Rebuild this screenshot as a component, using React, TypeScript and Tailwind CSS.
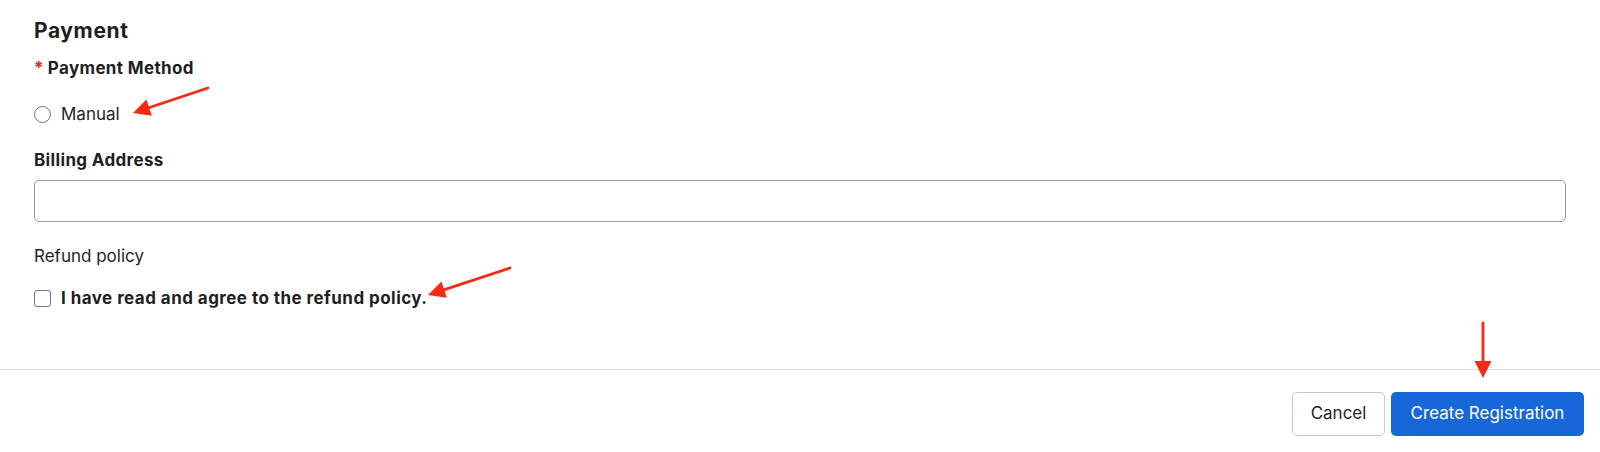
import React from 'react';

function Arrow({ x1, y1, x2, y2 }: { x1: number; y1: number; x2: number; y2: number }) {
  // line from (x1,y1) to tip (x2,y2), with a filled head
  const dx = x2 - x1;
  const dy = y2 - y1;
  const len = Math.sqrt(dx * dx + dy * dy);
  const ux = dx / len;
  const uy = dy / len;
  const headLen = 17;
  const headW = 8.5;
  const bx = x2 - ux * headLen;
  const by = y2 - uy * headLen;
  const p1 = `${bx - uy * headW},${by + ux * headW}`;
  const p2 = `${bx + uy * headW},${by - ux * headW}`;
  return (
    <g>
      <line x1={x1} y1={y1} x2={bx + ux * 2} y2={by + uy * 2} stroke="#f52a12" strokeWidth={2.8} strokeLinecap="round" />
      <polygon points={`${x2},${y2} ${p1} ${p2}`} fill="#f52a12" />
    </g>
  );
}

export default function App() {
  return (
    <div className="relative w-[1600px] h-[452px] bg-white text-[#1f1f1f] font-['Inter','Liberation_Sans',sans-serif] overflow-hidden">
      <div className="px-[34px] pt-[17px]">
        <h2 className="text-[21px] leading-[28px] font-bold tracking-[0.6px]">Payment</h2>

        <div className="mt-[11px] text-[17px] leading-[24px] font-bold tracking-[0.35px]">
          <span className="text-[#e5271a] mr-[4px]">*</span>Payment Method
        </div>

        <label className="mt-[22px] flex items-center gap-[10px] text-[17px] leading-[24px]">
          <span className="w-[17px] h-[17px] rounded-full border border-[#767676] bg-white" />
          <span>Manual</span>
        </label>

        <div className="mt-[22px] text-[17px] leading-[24px] font-bold tracking-[0.35px]">Billing Address</div>
        <input
          type="text"
          className="mt-[8px] block w-full h-[42px] rounded-[5px] border-[1.5px] border-[#9a9a9a] px-3 outline-none"
        />

        <div className="mt-[22px] text-[17px] leading-[24px]">Refund policy</div>

        <label className="mt-[18px] flex items-center gap-[10px] text-[17px] leading-[24px] font-bold tracking-[0.45px]">
          <span className="w-[17px] h-[17px] rounded-[3px] border border-[#767676] bg-white" />
          <span>I have read and agree to the refund policy.</span>
        </label>
      </div>

      <div className="absolute left-0 right-0 top-[369px] border-t border-[#dcdcdc]" />

      <div className="absolute right-[16px] top-[392px] flex gap-[6px]">
        <button className="h-[44px] w-[93px] rounded-[5px] border border-[#c9c9c9] bg-white text-[17px] text-[#1f1f1f]">
          Cancel
        </button>
        <button className="h-[44px] w-[193px] rounded-[5px] bg-[#1667d8] text-[17px] text-white">
          Create Registration
        </button>
      </div>

      <svg className="absolute inset-0 pointer-events-none" width={1600} height={452}>
        <Arrow x1={208} y1={88} x2={133} y2={113} />
        <Arrow x1={510} y1={268} x2={428} y2={295} />
        <Arrow x1={1483} y1={323} x2={1483} y2={378} />
      </svg>
    </div>
  );
}
